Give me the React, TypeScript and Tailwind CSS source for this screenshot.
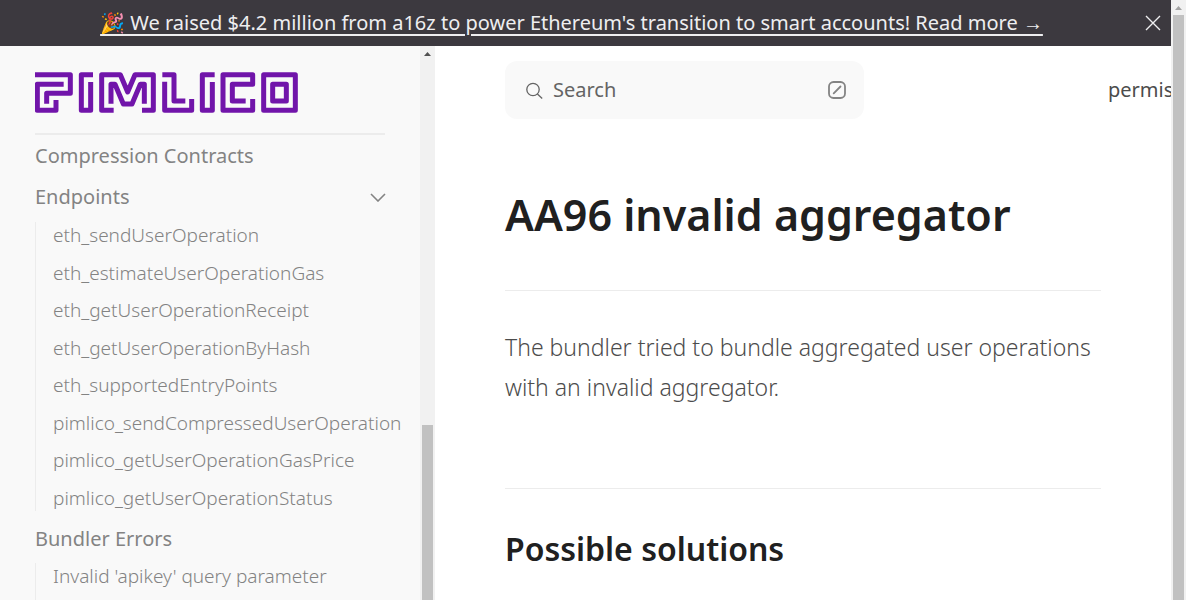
const endpoints = [
  'eth_sendUserOperation',
  'eth_estimateUserOperationGas',
  'eth_getUserOperationReceipt',
  'eth_getUserOperationByHash',
  'eth_supportedEntryPoints',
  'pimlico_sendCompressedUserOperation',
  'pimlico_getUserOperationGasPrice',
  'pimlico_getUserOperationStatus',
];

function Logo() {
  return (
    <svg viewBox="45 36 789 123" className="block h-[41px] w-[263px]" fill="none" stroke="#7115AA" strokeWidth="15" strokeLinejoin="round" role="img" aria-label="Pimlico">
      <path d="M45 44H151V100H80V131M131 73H52V151H108V120" />
      <path d="M219 44H184V151H212V66" />
      <path d="M281 151H245V44H301L323 96L345 44H400V151H366M273 131V73H285L310 132H336L361 73H373V131" />
      <path d="M427 44H462V123H496M434 65V151H515V117" />
      <path d="M584 44H547V151H577V66" />
      <path d="M698 117V151H609V44H698V73H637V123H677" />
      <path d="M731 44H826V151H731ZM758 73H799V123H758Z" />
    </svg>
  );
}

function Banner() {
  return (
    <div className="flex h-[46px] shrink-0 items-center bg-[#3c393f] pr-2 text-[#eeeef0]">
      <div className="min-w-0 flex-1 text-center">
        <a href="#funding" className="whitespace-nowrap text-[20px] leading-[28px] underline decoration-2 underline-offset-[4px]">
          🎉 We raised $4.2 million from a16z to power Ethereum's transition to smart accounts! Read more →
        </a>
      </div>
      <button aria-label="Close banner" className="flex size-[20px] items-center justify-center">
        <svg viewBox="0 0 16 16" className="size-4" stroke="currentColor" strokeWidth="1.4">
          <path d="M1 1L15 15M15 1L1 15" />
        </svg>
      </button>
    </div>
  );
}

function Sidebar() {
  return (
    <aside className="flex w-[435px] shrink-0 bg-[#f9f9f9]">
      <div className="min-w-0 flex-1 overflow-hidden pl-[35px] pt-[26px]">
        <div className="mr-[35px] border-b-2 border-[#ececec] pb-[20px]">
          <a href="#home" className="block"><Logo /></a>
        </div>
        <nav className="text-[#838383]">
          <a href="#compression" className="mt-[7px] block text-[20px] leading-[28px]">Compression Contracts</a>
          <button className="mt-[13px] flex w-[351px] items-center justify-between text-[20px] leading-[28px]">
            Endpoints
            <svg viewBox="0 0 16 9" className="h-[9px] w-4" fill="none" stroke="currentColor" strokeWidth="1.6">
              <path d="M1 1L8 8L15 1" />
            </svg>
          </button>
          <ul className="mt-[11px] flex min-h-[289px] flex-col justify-between border-l border-[#ececec] pl-[17px] text-[19px] font-light leading-[26px]">
            {endpoints.map((name) => (
              <li key={name}><a href={`#${name}`}>{name}</a></li>
            ))}
          </ul>
          <button className="mt-[14px] block text-[20px] leading-[28px]">Bundler Errors</button>
          <ul className="mt-[10px] flex flex-col gap-3 border-l border-[#ececec] pb-[26px] pl-[17px] text-[19px] font-light leading-[26px]">
            <li><a href="#apikey">Invalid 'apikey' query parameter</a></li>
          </ul>
        </nav>
      </div>
      <div className="flex w-[15px] shrink-0 flex-col items-center bg-[#f1f1f1]">
        <svg viewBox="0 0 7 4" className="mt-[6px] h-1 w-[7px] shrink-0" fill="#505050"><path d="M0 4L3.5 0L7 4Z" /></svg>
        <div className="mt-[369px] w-[11px] flex-1 bg-[#c1c1c1]" />
      </div>
    </aside>
  );
}

function Content() {
  return (
    <main className="min-w-0 flex-1 overflow-hidden bg-white pl-[70px] pt-[15px]">
      <div className="flex items-center justify-between">
        <button className="flex h-[58px] w-[359px] shrink-0 items-center rounded-[12px] bg-[#f9f9f9] pl-[19px] pr-[18px] text-[20px] text-[#646464]">
          <svg viewBox="0 0 20 20" className="mr-[9px] mt-[2px] size-[20px]" fill="none" stroke="currentColor" strokeWidth="1.3">
            <circle cx="9" cy="8.5" r="6.2" />
            <path d="M13.4 13L18.2 17.5" />
          </svg>
          Search
          <svg viewBox="0 0 18 18" className="ml-auto size-[18px]" fill="none" stroke="#838383" strokeWidth="1.8" strokeLinecap="round">
            <rect x="1" y="1" width="16" height="16" rx="4.5" />
            <path d="M5.7 12.3L12.5 5.5" />
          </svg>
        </button>
        <a href="#permissionless" className="w-[63px] overflow-hidden whitespace-nowrap text-[20px] text-[#4c4c4c]">permis</a>
      </div>
      <article className="mr-[70px] text-[#202020]">
        <header className="border-b border-[#ececec] pb-[47px] pt-[67px]">
          <h1 className="text-[43px] font-semibold leading-[57px]">AA96 invalid aggregator</h1>
        </header>
        <p className="mt-[36px] text-[23px] font-light leading-[40px] text-[#4c4c4c]">
          The bundler tried to bundle aggregated user operations with an invalid aggregator.
        </p>
        <h2 className="mt-[81px] border-t border-[#ececec] pt-[38px] text-[32px] font-semibold leading-[44px]">Possible solutions</h2>
      </article>
    </main>
  );
}

export default function App() {
  return (
    <div className="flex h-screen overflow-hidden bg-white font-['Noto_Sans',sans-serif]">
      <div className="flex min-w-0 flex-1 flex-col">
        <Banner />
        <div className="flex min-h-0 flex-1">
          <Sidebar />
          <Content />
        </div>
      </div>
      <div className="flex w-[15px] shrink-0 flex-col items-center bg-[#f1f1f1]">
        <svg viewBox="0 0 7 4" className="mt-[6px] h-1 w-[7px] shrink-0" fill="#a3a3a3"><path d="M0 4L3.5 0L7 4Z" /></svg>
        <div className="mt-[5px] w-[11px] flex-1 bg-[#c1c1c1]" />
      </div>
    </div>
  );
}
